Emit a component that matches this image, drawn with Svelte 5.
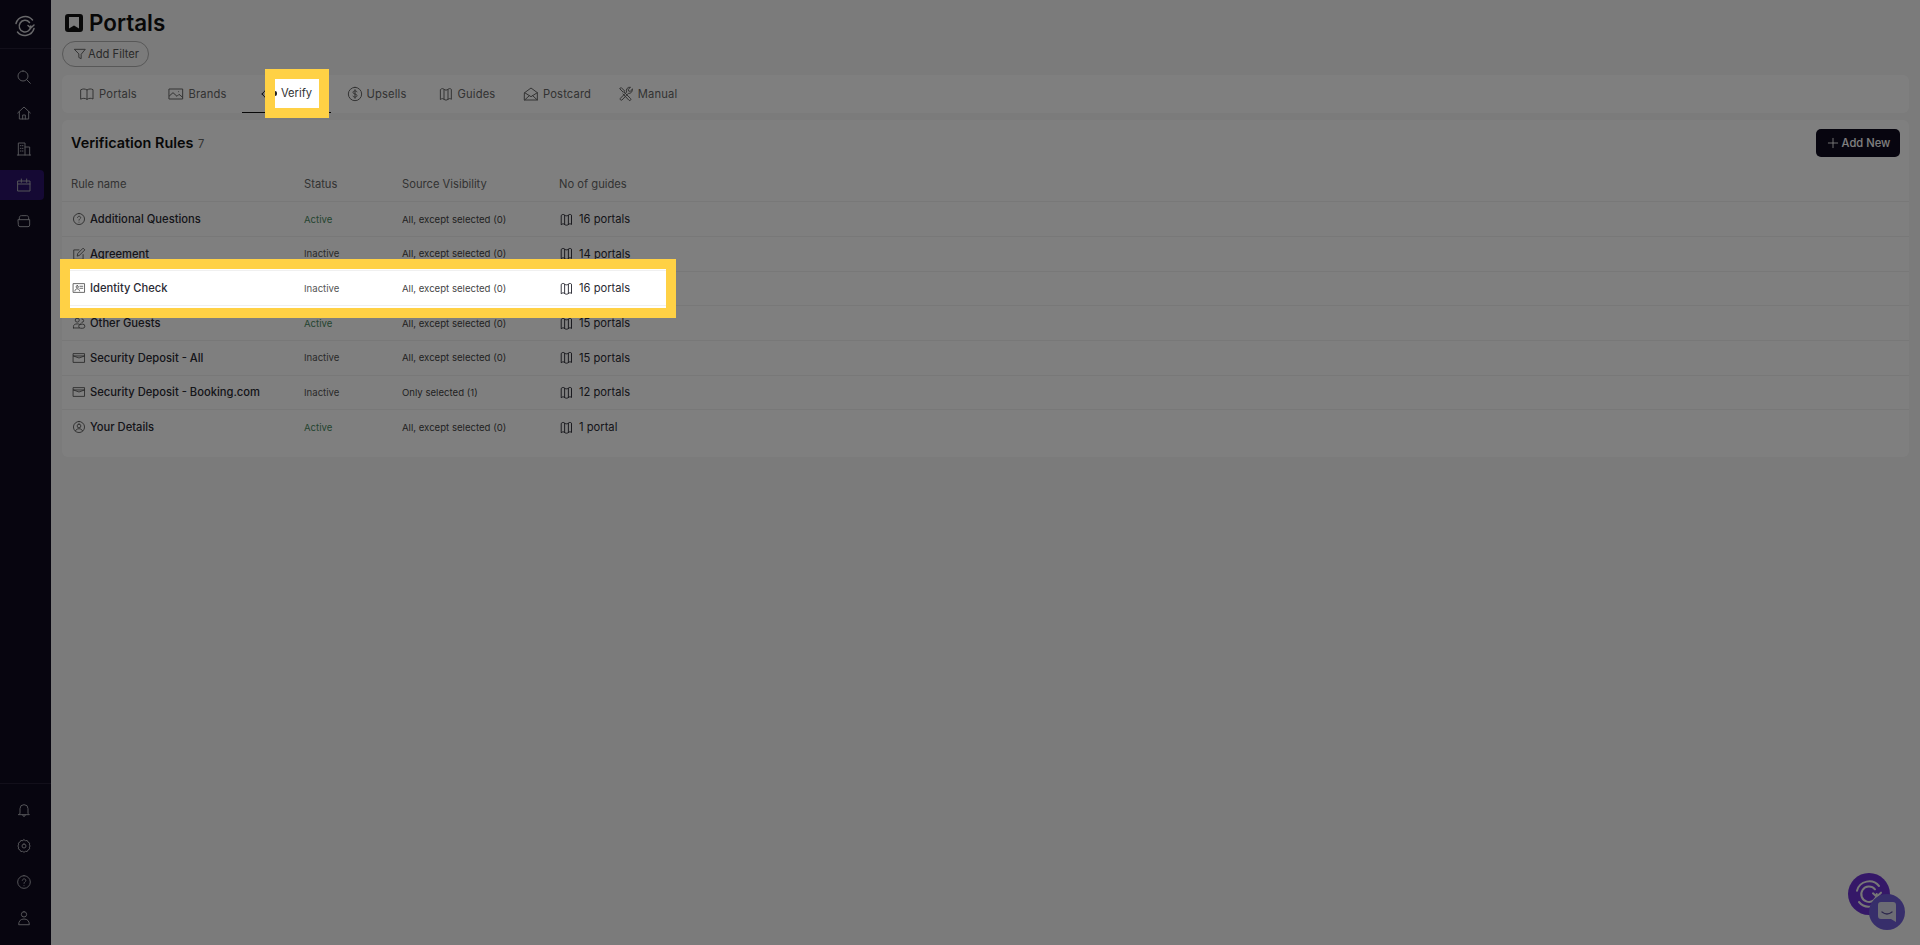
<script>
  const tabs = [
    { label: 'Portals', icon: 'book' },
    { label: 'Brands', icon: 'image' },
    { label: 'Verify', icon: 'eye', active: true },
    { label: 'Upsells', icon: 'coin' },
    { label: 'Guides', icon: 'map' },
    { label: 'Postcard', icon: 'mail' },
    { label: 'Manual', icon: 'tools' }
  ];

  const rules = [
    { name: 'Additional Questions', icon: 'question', status: 'Active', source: 'All, except selected (0)', guides: '16 portals' },
    { name: 'Agreement', icon: 'pen', status: 'Inactive', source: 'All, except selected (0)', guides: '14 portals' },
    { name: 'Identity Check', icon: 'id', status: 'Inactive', source: 'All, except selected (0)', guides: '16 portals', spot: true },
    { name: 'Other Guests', icon: 'users', status: 'Active', source: 'All, except selected (0)', guides: '15 portals' },
    { name: 'Security Deposit - All', icon: 'wallet', status: 'Inactive', source: 'All, except selected (0)', guides: '15 portals' },
    { name: 'Security Deposit - Booking.com', icon: 'wallet', status: 'Inactive', source: 'Only selected (1)', guides: '12 portals' },
    { name: 'Your Details', icon: 'user', status: 'Active', source: 'All, except selected (0)', guides: '1 portal' }
  ];

  const paths = {
    book: 'M3 5.500C5.500 4 9 4 12 6c3-2 6.500-2 9-.5v14c-2.500-1.500-6-1.500-9 .5-3-2-6.500-2-9-.5zM12 6v14',
    image: 'M2 4.500h20v15H2zM2 15l5.500-5 6 5.500 3-3 5.500 4.500M16 8.500h.01',
    eye: 'M2 12c2.500-4.500 5.800-7 10-7s7.500 2.500 10 7c-2.500 4.500-5.800 7-10 7s-7.500-2.500-10-7zM12 9a3 3 0 1 0 0 6 3 3 0 0 0 0-6z',
    coin: 'M12 2a10 10 0 1 0 0 20 10 10 0 0 0 0-20zM15 8.800c-.500-1-1.600-1.500-3-1.500-1.700 0-3 .9-3 2.300 0 3.200 6 1.600 6 4.800 0 1.400-1.300 2.300-3 2.300-1.400 0-2.500-.5-3-1.500M12 5.500v13',
    map: 'M4 5c1.700-1.500 3.300-1.500 5 0 2 1.500 4 1.500 6 0 1.700-1.500 3.300-1.500 5 0v15c-1.700-1.500-3.300-1.500-5 0-2 1.500-4 1.500-6 0-1.700-1.500-3.300-1.500-5 0zM9 5.500v14.500M15 5.500v14.500',
    mail: 'M2.500 10 12 3l9.500 7v11h-19zM2.500 10l9.500 6 9.500-6M2.500 21l7-6.500M21.500 21l-7-6.500',
    tools: 'M3 3.500 5 2.500l5 5-2 2-5-5zM9.500 9.500l9.500 9.500a1.800 1.800 0 0 1-2.500 2.500L7.500 12M21.500 5l-3.200 3-2.500-.5-.5-2.500L18.800 2a5 5 0 0 0-5.800 7L3.500 18.500a1.800 1.800 0 0 0 2.500 2.500L15.500 11a5 5 0 0 0 6-6z',
    question: 'M12 2.500a9.500 9.500 0 1 0 0 19 9.500 9.500 0 0 0 0-19zM9.500 9.500c.300-1.400 1.300-2.200 2.700-2.200 1.500 0 2.600 1 2.600 2.300 0 2.200-2.800 2.100-2.800 4.400M12 17.500h.01',
    pen: 'M19 13v8H3V5h9M9 15l1-4L19 2l3 3-9 9z',
    id: 'M2.500 4.500h19v15h-19zM13.500 9h5M13.500 12.500h5M9 8a2 2 0 1 0 0 4 2 2 0 0 0 0-4zM5 17c.300-2.500 1.800-3.500 4-3.500s3.700 1 4 3.500',
    users: 'M9 3.500a3.500 3.500 0 1 0 0 7 3.500 3.500 0 0 0 0-7zM2.500 20.500v-2.500c0-2.800 2.500-4.500 6.500-4.500 1.500 0 2.700.2 3.700.7M2.500 20.500h10M17 5a3 3 0 0 1 0 6M15 14h3.500a3.500 3.500 0 0 1 0 7H15a3.500 3.500 0 0 1 0-7z',
    wallet: 'M2.500 4.500h19v15h-19zM2.500 8.500h19M2.500 8.500 12 12l9.500-3.500',
    user: 'M12 2.500a9.500 9.500 0 1 0 0 19 9.500 9.500 0 0 0 0-19zM12 7a3.200 3.200 0 1 0 0 6.400A3.200 3.200 0 0 0 12 7zM6 18.500c1-2.300 3.200-3.500 6-3.500s5 1.200 6 3.500',
    search: 'M10.500 3a7.500 7.500 0 1 0 0 15 7.500 7.500 0 0 0 0-15zM16 16l5.500 5.500',
    home: 'M2.500 12 12 3l9.500 9M5 10v11h14V10M10 21v-6h4v6',
    building: 'M3.500 21V3h10v18M13.500 9h7v12M2 21h20M6.500 7h1M9.500 7h1M6.500 11h1M9.500 11h1M6.500 15h1M9.500 15h1',
    calendar: 'M3 6h18v15H3zM3 10.500h18M8 3v5M16 3v5',
    drawer: 'M5 10V7c0-1.500 1-3 3-3h8c2 0 3 1.500 3 3v3M3.500 10h17v8a2.500 2.500 0 0 1-2.500 2.500H6A2.500 2.500 0 0 1 3.500 18z',
    bell: 'M6 17V10a6 6 0 0 1 12 0v7l2 2H4zM10 19.500a2 2 0 0 0 4 0',
    gear: 'M12 2.500l2 1.500 2.800-.3 1.300 2.500 2.400 1.400-.5 2.900L21.500 12l-1.500 1.500.5 2.900-2.400 1.400-1.300 2.500-2.800-.3-2 1.500-2-1.500-2.800.3-1.300-2.500-2.400-1.400.5-2.900L2.500 12 4 10.500l-.5-2.900 2.400-1.400 1.300-2.500 2.800.3zM12 9a3 3 0 1 0 0 6 3 3 0 0 0 0-6z',
    help: 'M12 2.500a9.500 9.500 0 1 0 0 19 9.500 9.500 0 0 0 0-19zM9.500 9.500c.300-1.400 1.300-2.200 2.700-2.200 1.500 0 2.600 1 2.600 2.300 0 2.200-2.800 2.100-2.800 4.400M12 17.500h.01',
    person: 'M12 2.500a4 4 0 1 0 0 8 4 4 0 0 0 0-8zM4 21.500c0-5 3-8 8-8s8 3 8 8z',
    filter: 'M3 4h18l-7 8.500V20l-4-2v-5.500z',
    plus: 'M12 4v16M4 12h16',
    logo: 'M3 9.500A9.500 9.500 0 0 1 19.500 6M21 14.500A9.500 9.500 0 0 1 4.500 18M16.500 8.500a5.800 5.800 0 1 0 1.300 3.500M15 11.500l2.800 2.500 3.200-3'
  };

  const topNav = ['search', 'home', 'building', 'calendar', 'drawer'];
  const bottomNav = ['bell', 'gear', 'help', 'person'];
</script>

{#snippet icon(name, size, cls = '')}
  <svg class={cls} width={size} height={size} viewBox="0 0 24 24" fill="none" stroke="currentColor" stroke-width="1.500" stroke-linecap="round" stroke-linejoin="round">
    <path d={paths[name]} />
  </svg>
{/snippet}

<div class="page">
  <aside class="sidebar">
    <div class="brand">{@render icon('logo', 24)}</div>
    <nav class="nav">
      {#each topNav as item}
        <div class="nav-item" class:active={item === 'calendar'}>{@render icon(item, 16)}</div>
      {/each}
    </nav>
    <nav class="nav bottom">
      {#each bottomNav as item}
        <div class="nav-item">{@render icon(item, 16)}</div>
      {/each}
    </nav>
  </aside>

  <main class="content">
    <h1 class="title">
      <svg width="20" height="20" viewBox="0 0 20 20"><path d="M4 1h12a3 3 0 0 1 3 3v12a3 3 0 0 1-3 3H4a3 3 0 0 1-3-3V4a3 3 0 0 1 3-3zm1 3v11.500l5-3 5 3V4z" fill="currentColor" fill-rule="evenodd" /></svg>
      Portals
    </h1>
    <button class="filter">{@render icon('filter', 14)} Add Filter</button>

    <div class="tabs">
      {#each tabs as tab}
        <div class="tab" class:active={tab.active}>
          <span class="tab-icon">{@render icon(tab.icon, 16)}</span>
          <span class="tab-label">{tab.label}</span>
        </div>
      {/each}
    </div>

    <section class="card">
      <header class="card-head">
        <h2>Verification Rules <span class="count">7</span></h2>
        <button class="add">{@render icon('plus', 14)} Add New</button>
      </header>
      <div class="cols thead">
        <span>Rule name</span>
        <span>Status</span>
        <span>Source Visibility</span>
        <span>No of guides</span>
      </div>
      {#each rules as rule}
        <div class="row">
          <div class="cols" class:spot={rule.spot}>
            <span class="name">{@render icon(rule.icon, 14)} {rule.name}</span>
            <span class="status" class:on={rule.status === 'Active'}>{rule.status}</span>
            <span class="source">{rule.source}</span>
            <span class="guides">{@render icon('map', 15)} {rule.guides}</span>
          </div>
        </div>
      {/each}
    </section>
  </main>

  <div class="launcher">
    {@render icon('logo', 32)}
    <div class="chat">
      <svg width="18" height="20" viewBox="0 0 18 20"><path d="M3 0h12a3 3 0 0 1 3 3v17l-5-3H3a3 3 0 0 1-3-3V3a3 3 0 0 1 3-3z" fill="#d8d8e8" /><path d="M4 10c3 2.400 7 2.400 10 0" fill="none" stroke="#5a4f9a" stroke-width="1.300" stroke-linecap="round" /></svg>
    </div>
  </div>

  <div class="overlay"></div>
</div>

<style>
  :global(body) {
    margin: 0;
    font-family: Inter, "Liberation Sans", sans-serif;
    color: #111;
  }

  .page {
    display: flex;
    height: 945px;
    overflow: hidden;
    background: #f6f6f6;
  }

  .overlay {
    position: fixed;
    inset: 0;
    background: rgba(0, 0, 0, 0.5);
    z-index: 5;
  }

  /* sidebar */
  .sidebar {
    width: 51px;
    flex: none;
    display: flex;
    flex-direction: column;
    background: #0e0a1e;
    color: #a8a8b0;
  }

  .brand {
    height: 49px;
    display: flex;
    align-items: center;
    justify-content: center;
    box-sizing: border-box;
    padding: 4px 2px 0 0;
    border-bottom: 1px solid #241f35;
    color: #d0d0d4;
  }

  .nav {
    display: flex;
    flex-direction: column;
    padding-top: 13px;
  }

  .nav.bottom {
    margin-top: auto;
    border-top: 1px solid #241f35;
    padding-top: 11px;
    padding-bottom: 6px;
  }

  .nav-item {
    width: 44px;
    height: 30px;
    margin-bottom: 6px;
    padding-left: 3px;
    box-sizing: border-box;
    display: flex;
    align-items: center;
    justify-content: center;
    border-radius: 0 4px 4px 0;
  }

  .nav-item.active {
    background: #2a1268;
  }

  /* main */
  .content {
    flex: 1;
    min-width: 0;
    padding: 0 11px;
  }

  .title {
    display: flex;
    align-items: center;
    gap: 5px;
    margin: 8px 0 0 2px;
    height: 29px;
    font-size: 22.400px;
    font-weight: 600;
  }

  .filter {
    display: flex;
    align-items: center;
    gap: 1px;
    height: 26px;
    margin-top: 4px;
    padding: 0 9px 0 10px;
    background: transparent;
    border: 1px solid #b0b0b0;
    border-radius: 13px;
    color: #555;
    font: 11.200px Inter, sans-serif;
  }

  .tabs {
    display: flex;
    height: 38px;
    margin-top: 8px;
    padding-left: 1px;
    background: #fff;
    border-radius: 6px;
    box-sizing: border-box;
    color: #666;
    font-size: 11.200px;
    letter-spacing: 0.15px;
  }

  .tab {
    display: flex;
    align-items: center;
    justify-content: center;
    gap: 4px;
    min-width: 89px;
    padding: 0 12px;
    box-sizing: border-box;
  }

  .tab:first-child {
    min-width: 90px;
  }

  .tab:nth-child(4) {
    min-width: 91px;
  }

  .tab.active {
    border-bottom: 1px solid #111;
    height: 38px;
  }

  .tab.active .tab-icon {
    color: #111;
  }

  .tab-icon {
    display: flex;
  }

  /* only the label of the active tab is lifted over the dim layer */
  .tab.active .tab-label {
    position: relative;
    z-index: 6;
    color: #333;
    background: #fff;
    letter-spacing: 0;
    padding: 7px 7px 8px 6px;
    margin: 0 -7px 0 -6px;
    outline: 10px solid #ffd145;
  }

  .tab.active .tab-label::before {
    content: '';
    position: absolute;
    left: 0;
    top: 12px;
    width: 2px;
    height: 5px;
    border-radius: 0 2px 2px 0;
    background: #222;
  }

  .card {
    margin-top: 7px;
    padding-bottom: 13px;
    background: #fff;
    border-radius: 6px;
  }

  .card-head {
    display: flex;
    align-items: flex-start;
    justify-content: space-between;
    height: 46px;
    box-sizing: border-box;
    padding: 9px 9px 0 9px;
  }

  h2 {
    margin: 0;
    line-height: 28px;
    font-size: 14.400px;
    font-weight: 600;
  }

  .count {
    margin-left: 1px;
    font-size: 11.200px;
    font-weight: 400;
    color: #666;
  }

  .add {
    display: flex;
    align-items: center;
    justify-content: center;
    gap: 2px;
    width: 84px;
    height: 28px;
    background: #0e0a1e;
    color: #fff;
    border: none;
    border-radius: 5px;
    font: 500 11.200px Inter, sans-serif;
  }

  .cols {
    display: grid;
    grid-template-columns: 232px 98px 157px 1fr;
    align-items: center;
    width: 596px;
    box-sizing: border-box;
    padding-left: 2px;
  }

  .thead {
    grid-template-columns: 233px 98px 157px 1fr;
    height: 35.300px;
    margin-left: 8px;
    padding-left: 1px;
    font-size: 11.200px;
    color: #666;
  }

  .row {
    height: 34.670px;
    padding-left: 8px;
    display: flex;
    box-sizing: border-box;
    border-top: 1px solid #f0f0f0;
  }

  .spot {
    position: relative;
    z-index: 6;
    height: 39px;
    margin-top: -2.700px;
    background: #fff;
    outline: 10px solid #ffd145;
  }

  .spot::before {
    content: '';
    position: absolute;
    inset: 1px 0 2px;
    border-top: 1px solid #f0f0f0;
    border-bottom: 1px solid #f0f0f0;
  }

  .name {
    position: relative;
    display: flex;
    align-items: center;
    gap: 4px;
    font-size: 11.200px;
    font-weight: 500;
    color: #2a2a33;
  }

  .name svg {
    color: #555;
  }

  .status {
    position: relative;
    font-size: 9.600px;
    color: #555;
  }

  .status.on {
    color: #4a8a62;
  }

  .source {
    position: relative;
    font-size: 9.600px;
    color: #444;
  }

  .guides {
    position: relative;
    display: flex;
    align-items: center;
    gap: 5px;
    font-size: 11.200px;
    color: #2a2a33;
  }

  /* floating launcher */
  .launcher {
    position: fixed;
    right: 30px;
    bottom: 30px;
    width: 42px;
    height: 42px;
    display: flex;
    align-items: center;
    justify-content: center;
    border-radius: 50%;
    background: #6a30d0;
    color: #eee;
  }

  .chat {
    position: absolute;
    right: -15px;
    bottom: -15px;
    width: 36px;
    height: 36px;
    border-radius: 50%;
    background: #6f5cd6;
    display: flex;
    align-items: center;
    justify-content: center;
  }
</style>
